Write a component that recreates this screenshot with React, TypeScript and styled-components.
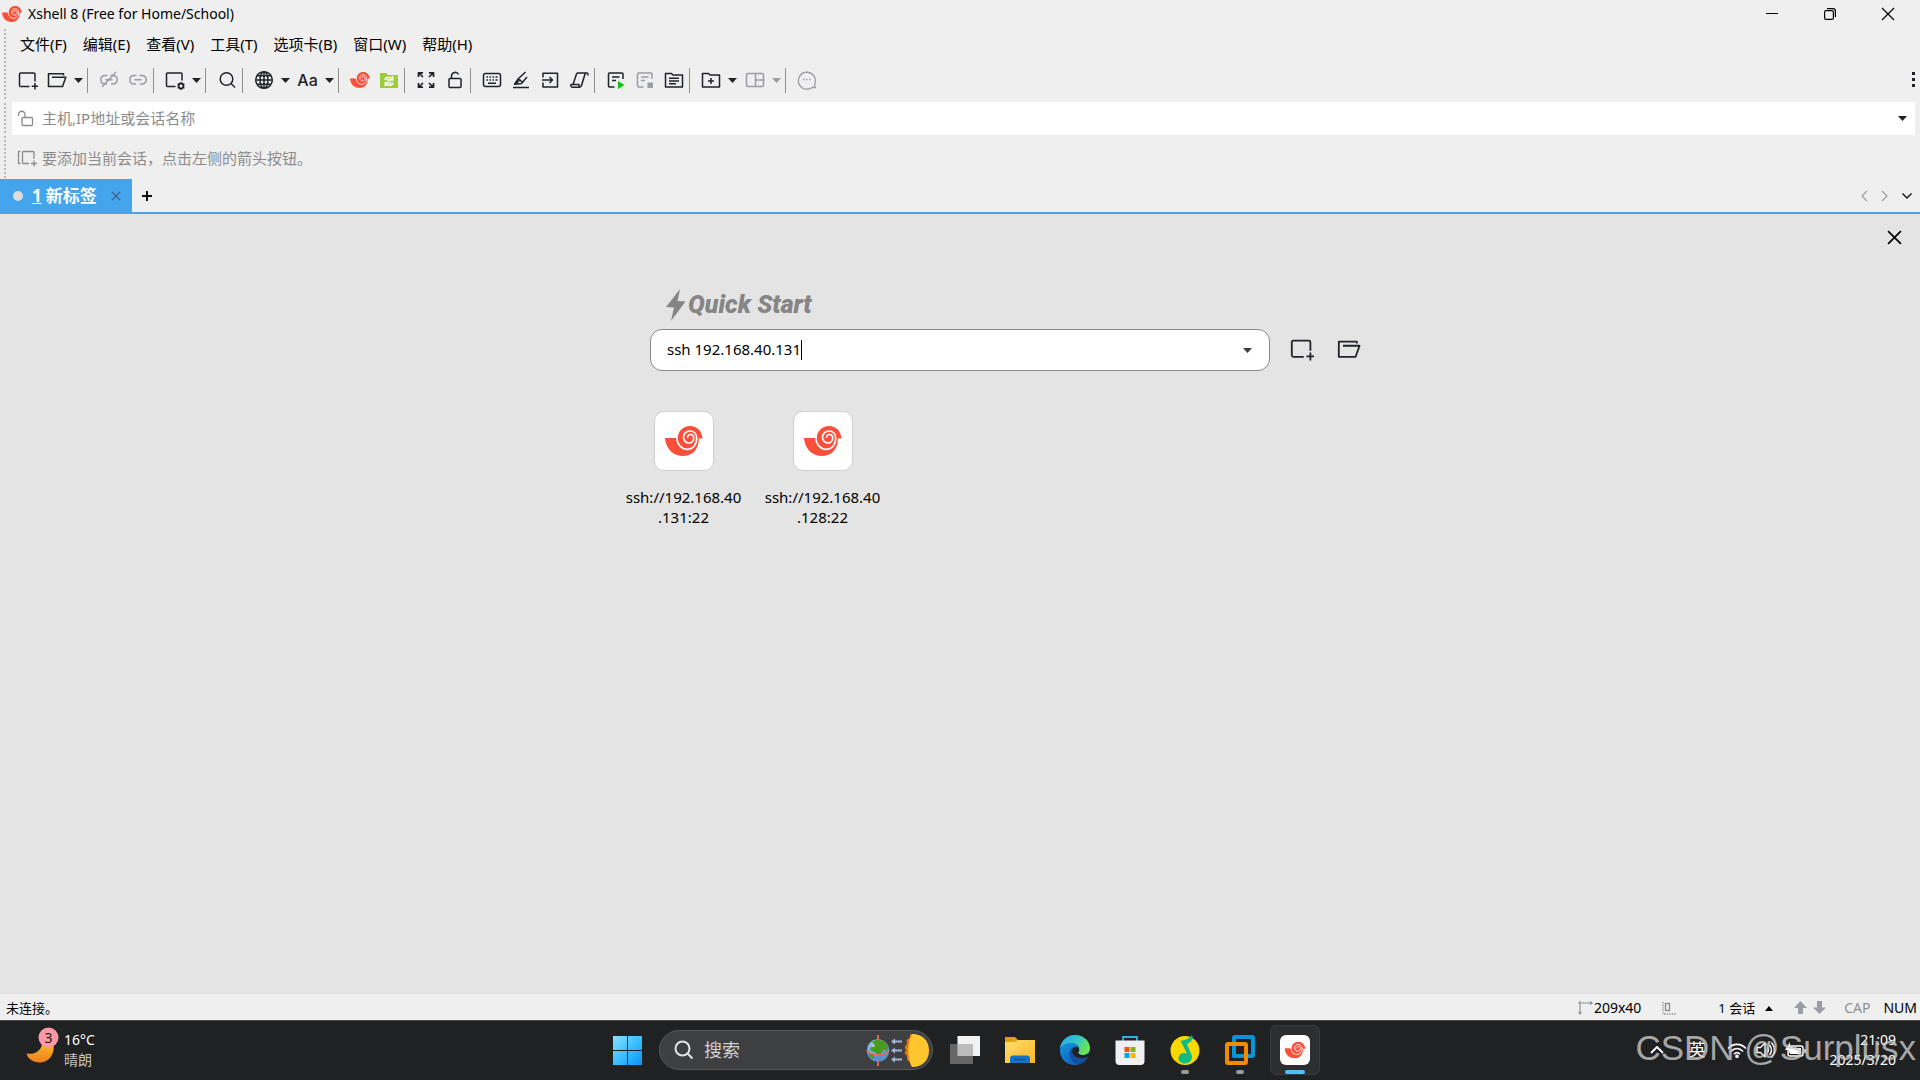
import React, { useState } from 'react';
import styled, { createGlobalStyle } from 'styled-components';

const Global = createGlobalStyle`
  *, *::before, *::after { box-sizing: border-box; }
  body {
    margin: 0;
    background: #efefef;
    color: #000;
    font: 14px/20px "Noto Sans", "Noto Sans CJK SC", sans-serif;
  }
  button, input { font: inherit; color: inherit; }
  button { border: 0; padding: 0; background: none; display: flex; align-items: center; justify-content: center; }
  svg { display: block; flex: none; }
`;

const Window = styled.div`
  display: flex;
  flex-direction: column;
  min-height: 100vh;
`;

const TitleBar = styled.header`
  display: flex;
  align-items: center;
  height: 28px;
  padding-left: 2px;
`;
const TitleText = styled.h1`
  flex: 1;
  margin: 0 0 0 6px;
  font-size: 14px;
  font-weight: 400;
`;
const WindowButton = styled.button`
  width: 58px;
  height: 28px;
`;
const WindowButtons = styled.div`
  display: flex;
  padding-right: 3px;
`;

const Band = styled.div<{ $height: number }>`
  display: flex;
  height: ${(p) => p.$height}px;
`;
const Grip = styled.span`
  flex: none;
  width: 2px;
  margin: 1px 7px 1px 4px;
  background: repeating-linear-gradient(#b9b9b9 0 2px, transparent 2px 4px);
`;

const Menu = styled.nav`
  display: flex;
  align-items: center;
  gap: 16px;
  padding-left: 7px;
`;
const MenuButton = styled.button`
  font-size: 15px;
`;

const Tools = styled.div`
  display: flex;
  flex: 1;
  align-items: center;
  padding-bottom: 2px;
`;
const ToolButton = styled.button<{ $dim?: boolean }>`
  width: 29px;
  height: 26px;
  color: ${(p) => (p.$dim ? '#9a9da3' : '#1f2228')};
`;
const DropButton = styled(ToolButton)`
  width: 15px;
`;
const Divider = styled.span`
  width: 1px;
  height: 25px;
  margin: 0 6px 0 1px;
  background: #8f8f8f;
`;
const FontLabel = styled.span`
  font: 500 16px/20px Inter, sans-serif;
`;
const Push = styled.span`
  flex: 1;
`;
const MoreButton = styled(ToolButton)`
  width: 14px;
`;

const AddressBar = styled.div`
  display: flex;
  flex: 1;
  align-items: center;
  margin: 0 5px 0 -1px;
  padding: 0 0 0 5px;
  background: #fff;
  color: #8c8c90;
`;
const AddressInput = styled.input`
  flex: 1;
  min-width: 0;
  margin-left: 7px;
  padding: 0 0 2px;
  border: 0;
  outline: 0;
  background: transparent;
  font-size: 15px;
  line-height: 24px;
  &::placeholder { color: #8c8c8c; opacity: 1; }
`;
const AddressDrop = styled(ToolButton)`
  width: 26px;
`;
const LinkBar = styled.div`
  display: flex;
  align-items: center;
  gap: 5px;
  padding: 2px 0 0 4px;
  color: #8c8c8c;
  font-size: 15px;
`;

const TabStrip = styled.div`
  display: flex;
  height: 35px;
  border-bottom: 2px solid #45a5ec;
`;
const Tab = styled.div`
  display: flex;
  align-items: center;
  width: 132px;
  padding: 0 9px 0 13px;
  background: #45a5ec;
  color: #fff;
`;
const TabDot = styled.span`
  width: 10px;
  height: 10px;
  margin-right: 9px;
  border-radius: 50%;
  background: #dcdcdc;
`;
const TabName = styled.button`
  flex: 1;
  justify-content: flex-start;
  gap: 4px;
  font-size: 17px;
  font-weight: 700;
  white-space: nowrap;
`;
const TabClose = styled.button`
  width: 14px;
  height: 20px;
  color: #3d5a72;
`;
const StripButton = styled.button<{ $width: number; $dim?: boolean }>`
  width: ${(p) => p.$width}px;
  color: ${(p) => (p.$dim ? '#a0a0a6' : '#111')};
`;

const Main = styled.main`
  display: flex;
  flex: 1;
  flex-direction: column;
  background: #e4e4e4;
`;
const PanelTop = styled.div`
  display: flex;
  justify-content: flex-end;
  padding: 11px 14px 0;
`;
const PanelClose = styled.button`
  width: 24px;
  height: 24px;
`;
const Quick = styled.section`
  display: grid;
  grid-template-columns: 1fr 620px 1fr;
  padding-top: 38px;
`;
const QuickTitle = styled.h2`
  grid-column: 2;
  display: flex;
  align-items: center;
  gap: 2px;
  height: 36px;
  margin: 0 0 6px;
  padding-left: 16px;
  color: #858585;
  font: italic 900 25px/36px Roboto, sans-serif;
`;
const CommandBox = styled.div`
  grid-column: 2;
  display: flex;
  align-items: center;
  height: 42px;
  padding: 0 13px 0 16px;
  border: 1px solid #8a8a8a;
  border-radius: 12px;
  background: #fff;
`;
const CommandInput = styled.input`
  field-sizing: content;
  min-width: 1px;
  padding: 0 0 2px;
  border: 0;
  outline: 0;
  background: transparent;
  caret-color: transparent;
  font-size: 15px;
  line-height: 22px;
`;
const TextCursor = styled.span`
  width: 1px;
  height: 20px;
  background: #000;
`;
const CommandDrop = styled.button`
  width: 18px;
  height: 24px;
  color: #3c3c3c;
`;
const SideActions = styled.div`
  display: flex;
  align-items: center;
  gap: 19px;
  padding: 0 0 2px 18px;
`;
const SideButton = styled.button`
  width: 28px;
  height: 28px;
  color: #1f2228;
`;
const Sessions = styled.ul`
  grid-column: 2;
  display: flex;
  margin: 40px 0 0 -36px;
  padding: 0;
  list-style: none;
`;
const SessionButton = styled.button`
  flex-direction: column;
  gap: 16px;
  width: 139px;
  font-size: 15px;
  line-height: 20px;
`;
const SessionTile = styled.span`
  display: flex;
  align-items: center;
  justify-content: center;
  width: 60px;
  height: 60px;
  border: 1px solid #cfcfcf;
  border-radius: 10px;
  background: #fff;
`;
const SessionName = styled.span`
  width: 122px;
  white-space: pre-line;
`;

const StatusBar = styled.footer`
  display: flex;
  align-items: center;
  height: 26px;
  padding: 2px 3px 0 6px;
  background: #efefef;
`;
const StatusText = styled.span<{ $dim?: boolean; $small?: boolean; $left?: number }>`
  margin-left: ${(p) => p.$left ?? 0}px;
  font-size: ${(p) => (p.$small ? 13 : 14)}px;
  color: ${(p) => (p.$dim ? '#8f8f8f' : '#000')};
`;
const StatusIcon = styled.span<{ $left: number }>`
  margin-left: ${(p) => p.$left}px;
`;

const Taskbar = styled.div`
  position: relative;
  display: grid;
  grid-template-columns: 1fr auto 1fr;
  height: 60px;
  padding-bottom: 1px;
  border-top: 1px solid #4a4a4c;
  background: #202123;
  color: #fff;
`;
const Weather = styled.button`
  justify-self: start;
  gap: 4px;
  padding-left: 26px;
`;
const WeatherText = styled.span`
  display: flex;
  flex-direction: column;
  text-align: left;
  font-size: 14px;
`;
const Muted = styled.span`
  color: #c4c4c4;
`;
const Apps = styled.div`
  display: flex;
  align-items: center;
  padding-left: 2px;
`;
const AppButton = styled.button`
  position: relative;
  width: 55px;
  height: 58px;
`;
const AppPlate = styled.span<{ $active?: boolean }>`
  display: flex;
  align-items: center;
  justify-content: center;
  width: 50px;
  height: 50px;
  border-radius: 6px;
  border: 1px solid ${(p) => (p.$active ? '#3a3b3d' : 'transparent')};
  background: ${(p) => (p.$active ? '#2d2e30' : 'transparent')};
`;
const AppMark = styled.span<{ $active?: boolean }>`
  position: absolute;
  bottom: 5px;
  left: 50%;
  width: ${(p) => (p.$active ? 20 : 8)}px;
  height: 4px;
  border-radius: 2px;
  background: ${(p) => (p.$active ? '#4cc2ff' : '#9a9a9a')};
  transform: translateX(-50%);
`;
const Search = styled.label`
  display: flex;
  align-items: center;
  width: 274px;
  height: 40px;
  margin: 0 4px;
  padding: 0 2px 0 14px;
  border: 1px solid #58595b;
  border-radius: 20px;
  background: #3e3f41;
`;
const SearchInput = styled.input`
  flex: 1;
  min-width: 0;
  margin-left: 10px;
  padding: 0;
  border: 0;
  outline: 0;
  background: transparent;
  font-size: 18px;
  line-height: 26px;
  &::placeholder { color: #d2d2d2; opacity: 1; }
`;
const Tray = styled.div`
  display: flex;
  align-items: center;
  justify-content: flex-end;
  padding-right: 24px;
`;
const TrayButton = styled.button<{ $width: number }>`
  width: ${(p) => p.$width}px;
  height: 40px;
  font-size: 17px;
`;
const Clock = styled.time`
  display: flex;
  flex-direction: column;
  width: 84px;
  text-align: right;
  font-size: 14px;
`;
const Watermark = styled.span`
  position: absolute;
  right: 4px;
  top: 5px;
  color: rgba(205, 205, 205, 0.78);
  font: 35px/44px "Liberation Sans", sans-serif;
  pointer-events: none;
`;

const Shell = ({ size = 20, bg = '#efefef' }: { size?: number; bg?: string }) => (
  <svg width={size} height={Math.round(size * 0.8)} viewBox="0 0 38 30" aria-hidden="true">
    <path fill="#fb4f39" d="M0 12H12.800C13 5 18 0 25 0C32 0 37 5 37.500 12.600H33.800C34 22.500 28 30 18.500 30C8 30 1 23 0 12Z" />
    <path fill="none" stroke={bg} strokeWidth="1.700" d="M11.800 11C12 19 17 23.300 22 23.300C28.500 23.300 31.700 18 31.700 12.600C31.700 7.500 28.500 5 25 5C21 5 18.500 8 18.500 11.200C18.500 14.500 21 17 24 17C27 17 28.700 14.500 28.700 12C28.700 9.700 27 8.500 25.500 8.500C23.500 8.500 22.300 10 22.700 11.700" />
  </svg>
);

const Line = ({ children, w = 20, h = 20, sw = 1.5, box }: { children: React.ReactNode; w?: number; h?: number; sw?: number; box?: string }) => (
  <svg width={w} height={h} viewBox={box ?? `0 0 ${w} ${h}`} fill="none" stroke="currentColor" strokeWidth={sw} strokeLinejoin="round" aria-hidden="true">
    {children}
  </svg>
);

const Down = () => (
  <svg width="9" height="5" viewBox="0 0 9 5" fill="currentColor" aria-hidden="true"><path d="M0 0H9L4.500 5Z" /></svg>
);
const NewSession = ({ size = 20 }: { size?: number }) => (
  <Line w={size} h={size} box="0 0 20 20"><path d="M11.500 16.500H2.800A1.300 1.300 0 0 1 1.500 15.200V4.300A1.300 1.300 0 0 1 2.800 3H15.700A1.300 1.300 0 0 1 17 4.300V11.500M17 13V19.500M13.700 16.200H20" /></Line>
);
const OpenFolder = ({ size = 20 }: { size?: number }) => (
  <Line w={size} h={size} box="0 0 20 20"><path d="M16.500 5.500V3.800H1.500V16.500H15.500L18.800 7.300H5" /></Line>
);
const Link = ({ off }: { off?: boolean }) => (
  <Line>
    <path d="M8.500 5.500H5.500A4.300 4.300 0 0 0 5.500 14H8M11.500 5.500H14.500A4.300 4.300 0 0 1 14.500 14H12M6.500 9.800H13.500" />
    {off && <path d="M3 17L17 2" />}
  </Line>
);
const Cross = ({ size, sw = 1.3 }: { size: number; sw?: number }) => (
  <Line w={size} h={size} sw={sw} box="0 0 14 14"><path d="M1 1L13 13M13 1L1 13" /></Line>
);

const icons: Record<string, React.ReactNode> = {
  new: <NewSession />,
  open: <OpenFolder />,
  unlink: <Link off />,
  link: <Link />,
  props: (
    <Line><path d="M10.500 16.500H2.500A1 1 0 0 1 1.500 15.500V4A1 1 0 0 1 2.500 3H16A1 1 0 0 1 17 4V10.500" /><circle cx="16" cy="16" r="2.400" strokeWidth="2" /><path strokeWidth="1" d="M16 12V20M12.500 14L19.500 18M12.500 18L19.500 14" /><circle cx="16" cy="16" r="1.500" fill="#efefef" stroke="none" /></Line>
  ),
  search: <Line><circle cx="9.500" cy="9" r="6.300" /><path d="M14 13.500L18 17.500" /></Line>,
  globe: <Line><circle cx="10" cy="10" r="8.300" /><ellipse cx="10" cy="10" rx="4" ry="8.300" /><path d="M10 1.700V18.300M1.700 10H18.300M3 5.800H17M3 14.200H17" /></Line>,
  font: <FontLabel>Aa</FontLabel>,
  xshell: <Shell size={20} />,
  xftp: (
    <svg width="20" height="20" viewBox="0 0 20 20" aria-hidden="true"><path fill="#9ccb3b" d="M1 3H7L9 5H19V18H1Z" /><path fill="none" stroke="#fff" strokeWidth="1.700" d="M6 10C6.500 7 11 6.300 13 8.800M13.600 6.300V9.900H8M14 12.500C13.500 15.500 9 16.300 7 13.800M6.400 16.300V12.700H12" /></svg>
  ),
  expand: <Line sw={1.7}><path d="M2.500 7V2.800H7M2.800 3L7 7M13 2.800H17.500V7M17.200 3L13 7M2.500 13V17.200H7M2.800 17L7 13M17.500 13V17.200H13M17.200 17L13 13" /></Line>,
  lock: <Line><rect x="4" y="8.500" width="12" height="9" rx="1" /><path d="M6.500 8.500V5.500A3.700 3.700 0 0 1 13.500 4.500" /></Line>,
  keyboard: <Line><rect x="1.500" y="3.500" width="17" height="13" rx="2" /><path d="M4.500 7H6M7.500 7H9M10.500 7H12M13.500 7H15.500M4.500 10H6M7.500 10H9M10.500 10H12M13.500 10H15.500M6 13.300H14" /></Line>,
  pen: <Line><path d="M14.500 2L7.500 8.500L3.500 14.300L10.500 13.500L16 7M3.500 14.300L8.500 10.500M7.500 8.500L11.500 12.500M2 17.500H18" /></Line>,
  enter: <Line><path d="M3 7.500V3.200H17.500V17H3V12.500M2 10H12.500M9.500 7L12.500 10L9.500 13" /></Line>,
  scroll: <Line><path d="M19 5.500C19.500 2.500 16.500 2.500 16 4L12.500 15.500C12 17.500 9.500 17 10 14.500H2C1.500 17 2.500 17.300 4 17.300H11M4 14.500L7.500 4C8 3 8.500 3 9 3H17.500" /></Line>,
  play: <Line><path d="M8.500 17H3.500A1 1 0 0 1 2.500 16V4A1 1 0 0 1 3.500 3H16A1 1 0 0 1 17 4V9M6 7H13.500M6 10.500H10" /><path fill="#0bc50b" stroke="none" d="M12 11L18.500 15L12 19Z" /></Line>,
  stop: <Line><path d="M8.500 17H3.500A1 1 0 0 1 2.500 16V4A1 1 0 0 1 3.500 3H16A1 1 0 0 1 17 4V9M6 7H13.500M6 10.500H10" /><rect x="12.500" y="12.500" width="5.500" height="5.500" fill="currentColor" stroke="none" /></Line>,
  list: <Line><path d="M1.500 3.500H7.500L9 5H18.500V17H1.500ZM5 8.200H15M5 11H15M5 13.800H12" /></Line>,
  add: <Line><path d="M1.500 3.500H7.500L9 5H18.500V17H1.500ZM10 8V14M7 11H13" /></Line>,
  layout: <Line><rect x="1.500" y="3.500" width="17" height="13" rx="1.500" /><path d="M10.500 3.500V16.500M10.500 10H18.500" /></Line>,
  chat: <Line sw={1.3}><path d="M15 17.500H18.300L17.500 14.500A8.500 8.500 0 1 0 15 17.500" /><path d="M6 9.500H7.500M9 9.500H10.500M12 9.500H13.500" /></Line>,
};

type Tool = { id: string; label: string; dim?: boolean; menu?: boolean };
const toolGroups: Tool[][] = [
  [{ id: 'new', label: '新建' }, { id: 'open', label: '打开', menu: true }],
  [{ id: 'unlink', label: '断开', dim: true }, { id: 'link', label: '重新连接', dim: true }],
  [{ id: 'props', label: '属性', menu: true }],
  [{ id: 'search', label: '查找' }],
  [{ id: 'globe', label: '编码', menu: true }, { id: 'font', label: '字体', menu: true }],
  [{ id: 'xshell', label: 'Xshell' }, { id: 'xftp', label: 'Xftp' }],
  [{ id: 'expand', label: '全屏' }, { id: 'lock', label: '锁定' }],
  [{ id: 'keyboard', label: '键盘' }, { id: 'pen', label: '突出显示' }, { id: 'enter', label: '撰写' }, { id: 'scroll', label: '脚本' }],
  [{ id: 'play', label: '运行' }, { id: 'stop', label: '停止', dim: true }, { id: 'list', label: '日志' }],
  [{ id: 'add', label: '新建文件夹', menu: true }, { id: 'layout', label: '布局', dim: true, menu: true }],
  [{ id: 'chat', label: '反馈', dim: true }],
];
const menus = ['文件(F)', '编辑(E)', '查看(V)', '工具(T)', '选项卡(B)', '窗口(W)', '帮助(H)'];
const sessions = ['ssh://192.168.40\n.131:22', 'ssh://192.168.40\n.128:22'];

const Moon = () => (
  <svg width="34" height="48" viewBox="0 0 34 48" aria-hidden="true">
    <defs><linearGradient id="moon" x1="0" y1="0" x2="0" y2="1"><stop offset="0" stopColor="#f7c02c" /><stop offset="1" stopColor="#f07c1c" /></linearGradient></defs>
    <path fill="url(#moon)" d="M27 16C30 28 23 36.500 13.500 36.500C7 36.500 2 33 .5 27.500C9 29 15 25 16.500 17Z" />
    <circle cx="22.500" cy="11.500" r="10" fill="#fd98a4" />
    <text x="22.500" y="16.500" textAnchor="middle" fontSize="14" fill="#1a1a1a">3</text>
  </svg>
);
const Earth = () => (
  <svg width="64" height="34" viewBox="0 0 64 34" aria-hidden="true">
    <defs><radialGradient id="sea" cx=".4" cy=".3"><stop offset="0" stopColor="#b9dcf2" /><stop offset="1" stopColor="#5b90c8" /></radialGradient></defs>
    <path stroke="#ee6a4c" strokeWidth="1.500" d="M12 2V33" />
    <circle cx="12" cy="17.500" r="11.200" fill="url(#sea)" />
    <path fill="#4b9a1d" d="M6 9L11 6.500L18 8L22 13L21 18L18 16L16 19L13 23L10 20L4 17L5 14L9 14L8 11ZM3 20L8 22L8 26L4 24Z" />
    <path fill="none" stroke="#ee6a4c" strokeWidth="1.300" d="M.8 17.500C3 23 21 23 23.200 17.500M12 2V7M12 28V33" />
    <path fill="#9fb6d8" d="M25 8.500L29 5.500V7.500H36V9.500H29V11.500ZM25 17.500L29 14.500V16.500H36V18.500H29V20.500ZM25 26.500L29 23.500V25.500H36V27.500H29V29.500Z" />
    <path fill="#e8720c" d="M48 1L44 1.500L43.500 5L40.500 7L41 11L38.500 14L40 17L38.500 20L41 23L41 27L44 29L45 33L50 33Z" />
    <path fill="#ffc62e" d="M46 1C57 1 63 8 63 17.500C63 27 57 34 46 34C41 25 41 10 46 1Z" />
  </svg>
);

const StartLogo = () => (
  <svg width="29" height="29" viewBox="0 0 29 29" aria-hidden="true">
    <defs><linearGradient id="win" x1="0" y1="0" x2="1" y2="1"><stop offset="0" stopColor="#8be0ff" /><stop offset=".5" stopColor="#3cc0fb" /><stop offset="1" stopColor="#0a93f6" /></linearGradient></defs>
    <path fill="url(#win)" d="M0 0H14V14H0ZM15 0H29V14H15ZM0 15H14V29H0ZM15 15H29V29H15Z" />
  </svg>
);
const TaskView = () => (
  <svg width="30" height="30" viewBox="0 0 30 30" aria-hidden="true"><path fill="#f2f2f2" d="M7.500 1H30V21H7.500Z" /><path fill="#666" d="M0 9H7.500V21H23V29H0Z" /><path fill="#bcbcbc" d="M7.500 9H23V21H7.500Z" /></svg>
);
const Files = () => (
  <svg width="30" height="30" viewBox="0 0 30 30" aria-hidden="true">
    <defs><linearGradient id="fold" x1="0" y1="0" x2="1" y2="1"><stop offset="0" stopColor="#ffdd75" /><stop offset="1" stopColor="#fbb81c" /></linearGradient></defs>
    <path fill="#dfa00c" d="M0 2H10L13 5V8H0Z" /><path fill="url(#fold)" d="M0 7H10L13 5H30V28H0Z" /><path fill="#1473c8" d="M5 28V23Q5 20.500 8 20.500H22Q25 20.500 25 23V28Z" /><path stroke="#0c4f93" strokeWidth="1.200" d="M9 24.500H21" />
  </svg>
);
const Edge = () => (
  <svg width="30" height="30" viewBox="0 0 30 30" aria-hidden="true">
    <defs>
      <linearGradient id="eg" x1="0" y1="0" x2="1" y2=".4"><stop offset="0" stopColor="#2aa8e8" /><stop offset=".6" stopColor="#35c7c3" /><stop offset="1" stopColor="#6be355" /></linearGradient>
      <linearGradient id="eb" x1="0" y1="0" x2=".6" y2="1"><stop offset="0" stopColor="#1595dc" /><stop offset="1" stopColor="#0c65c4" /></linearGradient>
    </defs>
    <circle cx="15" cy="15" r="15" fill="#144f9e" />
    <path fill="url(#eg)" d="M0 14C.5 6 7 0 15 0C24 0 30 6.500 30 13C30 18 26 20 22.500 20C19.500 20 17.500 18.500 18.500 17C20.500 13 18 8.500 12 8.500C6 8.500 1 11 0 14Z" />
    <path fill="url(#eb)" d="M0 15C.5 11 5 8 10.500 8C15 8 18 10 18.500 12C14 10 9 14 9.500 19.500C10 25 14 29 19 29.500C8 32 0 25 0 15Z" />
    <path fill="#202123" d="M18.500 12.500C14 11 10.500 15 13 19C16 23.500 23 24.500 28.500 21.500L30 22V17C28 20 24.500 20.500 22 20C18.500 19.500 17.500 18 18.500 17C19.500 15.500 19.500 14 18.500 12.500Z" />
  </svg>
);
const Store = () => (
  <svg width="30" height="30" viewBox="0 0 30 30" aria-hidden="true">
    <path fill="none" stroke="#27b2e8" strokeWidth="1.800" d="M8 7V2H22V7" /><path fill="#f0f0f0" d="M.5 5.500H29.500V26Q29.500 30 25.500 30H4.500Q.5 30 .5 26Z" />
    <path fill="#f04e23" d="M9.500 12H14.500V17H9.500Z" /><path fill="#80b903" d="M15.500 12H20.500V17H15.500Z" /><path fill="#08a3ee" d="M9.500 18H14.500V23H9.500Z" /><path fill="#fcb707" d="M15.500 18H20.500V23H15.500Z" />
  </svg>
);
const Music = () => (
  <svg width="30" height="30" viewBox="0 0 30 30" aria-hidden="true"><circle cx="15" cy="15.500" r="14.500" fill="#fbd900" /><path fill="#10bb86" d="M10.500 6C14 5 19.500 4 22 0C24 4 21 7.500 17 9L22 21C22.500 25.500 19 28.500 15 28.500C11 28.500 8 26 8.500 22.500C9 19 13 17 17 18.500L10.500 6Z" /></svg>
);
const VmWare = () => (
  <svg width="30" height="30" viewBox="0 0 30 30" fill="none" aria-hidden="true"><rect x="9" y="2" width="19" height="19" rx="1" stroke="#0696d7" strokeWidth="4" /><rect x="2" y="9" width="19" height="19" rx="1" stroke="#f38b00" strokeWidth="4" /><path stroke="#0696d7" strokeWidth="4" d="M9 12V20.500H18" /><path stroke="#202123" strokeWidth="1" d="M11.500 11.500H18.500V18.500H11.500Z" /></svg>
);
const XshellApp = () => (
  <svg width="30" height="30" viewBox="0 0 30 30" aria-hidden="true"><rect width="30" height="30" rx="6" fill="#fff" /><g transform="translate(4.500 6.500)"><Shell size={21} bg="#fff" /></g></svg>
);

const apps = [
  { name: '任务视图', icon: <TaskView /> },
  { name: '文件资源管理器', icon: <Files /> },
  { name: 'Microsoft Edge', icon: <Edge /> },
  { name: 'Microsoft Store', icon: <Store /> },
  { name: 'QQ音乐', icon: <Music />, running: true },
  { name: 'VMware', icon: <VmWare />, running: true },
  { name: 'Xshell', icon: <XshellApp />, running: true, active: true },
];

export default function App() {
  const [command, setCommand] = useState('ssh 192.168.40.131');
  return (
    <Window>
      <Global />
      <TitleBar>
        <Shell size={20} />
        <TitleText>Xshell 8 (Free for Home/School)</TitleText>
        <WindowButtons>
          <WindowButton aria-label="最小化"><Line w={12} h={12} sw={1}><path d="M0 5.500H12" /></Line></WindowButton>
          <WindowButton aria-label="还原"><Line w={12} h={12} sw={1.2}><rect x=".6" y="2.600" width="8.800" height="8.800" rx="1.500" /><path d="M3 .6H9Q11.400 .6 11.400 3V9" /></Line></WindowButton>
          <WindowButton aria-label="关闭"><Cross size={14} sw={1.2} /></WindowButton>
        </WindowButtons>
      </TitleBar>

      <Band $height={32}>
        <Grip />
        <Menu>{menus.map((m) => <MenuButton key={m}>{m}</MenuButton>)}</Menu>
      </Band>
      <Band $height={42}>
        <Grip />
        <Tools>
          {toolGroups.map((group, i) => (
            <React.Fragment key={i}>
              {i > 0 && <Divider />}
              {group.map((t) => (
                <React.Fragment key={t.id}>
                  <ToolButton $dim={t.dim} aria-label={t.label}>{icons[t.id]}</ToolButton>
                  {t.menu && <DropButton $dim={t.id === 'layout'} aria-label={`${t.label}菜单`}><Down /></DropButton>}
                </React.Fragment>
              ))}
            </React.Fragment>
          ))}
          <Push />
          <MoreButton aria-label="更多">
            <svg width="3" height="16" viewBox="0 0 3 16" fill="currentColor" aria-hidden="true"><path d="M0 0H3V3H0ZM0 6H3V9H0ZM0 12H3V15H0Z" /></svg>
          </MoreButton>
        </Tools>
      </Band>
      <Band $height={33}>
        <Grip />
        <AddressBar>
          <Line w={18} h={18} sw={1.3}><rect x="5" y="7.500" width="10.500" height="8" rx="1" /><path d="M8 7.500V4.500A3 3 0 0 0 1.500 4.500V6" /></Line>
          <AddressInput aria-label="地址" placeholder="主机,IP地址或会话名称" />
          <AddressDrop aria-label="地址列表"><Down /></AddressDrop>
        </AddressBar>
      </Band>
      <Band $height={44}>
        <Grip />
        <LinkBar>
          <Line w={20} h={18} sw={1.3}><path d="M3.500 2.500H1.500V14.500H3.500M12 14.500H6.500A1 1 0 0 1 5.500 13.500V3.500A1 1 0 0 1 6.500 2.500H16A1 1 0 0 1 17 3.500V10M17 11.500V17.500M14 14.500H20" /></Line>
          <span>要添加当前会话，点击左侧的箭头按钮。</span>
        </LinkBar>
      </Band>

      <TabStrip>
        <Tab>
          <TabDot />
          <TabName><u>1</u> 新标签</TabName>
          <TabClose aria-label="关闭标签"><Cross size={10} sw={1.6} /></TabClose>
        </Tab>
        <StripButton $width={30} aria-label="新建标签"><Line w={10} h={10} sw={2}><path d="M5 0V10M0 5H10" /></Line></StripButton>
        <Push />
        <StripButton $width={19} $dim aria-label="上一个"><Line w={7} h={12} sw={1.3}><path d="M6 1L1 6L6 11" /></Line></StripButton>
        <StripButton $width={20} $dim aria-label="下一个"><Line w={7} h={12} sw={1.3}><path d="M1 1L6 6L1 11" /></Line></StripButton>
        <StripButton $width={26} aria-label="标签列表"><Line w={10} h={6} sw={1.4}><path d="M.5 .5L5 5L9.500 .5" /></Line></StripButton>
      </TabStrip>

      <Main>
        <PanelTop><PanelClose aria-label="关闭快速启动"><Cross size={15} sw={1.6} /></PanelClose></PanelTop>
        <Quick>
          <QuickTitle>
            <svg width="20" height="32" viewBox="0 0 20 32" fill="#858585" aria-hidden="true"><path d="M14 0L0 18L8 18.500L5 32L19.500 12.500L11.500 12Z" /></svg>
            Quick Start
          </QuickTitle>
          <CommandBox>
            <CommandInput aria-label="命令" value={command} onChange={(e) => setCommand(e.target.value)} />
            <TextCursor />
            <Push />
            <CommandDrop aria-label="历史记录"><Down /></CommandDrop>
          </CommandBox>
          <SideActions>
            <SideButton aria-label="新建会话"><NewSession size={24} /></SideButton>
            <SideButton aria-label="打开会话"><OpenFolder size={24} /></SideButton>
          </SideActions>
          <Sessions>
            {sessions.map((s) => (
              <li key={s}><SessionButton><SessionTile><Shell size={38} bg="#fff" /></SessionTile><SessionName>{s}</SessionName></SessionButton></li>
            ))}
          </Sessions>
        </Quick>
      </Main>

      <StatusBar>
        <StatusText $small>未连接。</StatusText>
        <Push />
        <svg width="15" height="14" viewBox="0 0 15 14" fill="none" stroke="#8f9296" strokeWidth="1.200" aria-hidden="true"><path d="M2 12V2H14M0 2H4M2 0V4M12 .5L14 2L12 3.500M.5 11L2 13L3.500 11" /></svg>
        <StatusText $left={1}>209x40</StatusText>
        <StatusIcon $left={21}><svg width="14" height="14" viewBox="0 0 14 14" fill="none" stroke="#85888c" strokeWidth="1.300" aria-hidden="true"><rect x="3.500" y="2.500" width="4" height="7" /><path strokeDasharray="1.300 1.300" d="M1 1V13H14" /></svg></StatusIcon>
        <StatusText $left={42} $small>1 会话</StatusText>
        <StatusIcon $left={10}><svg width="8" height="5" viewBox="0 0 8 5" aria-hidden="true"><path d="M0 5L4 0L8 5Z" /></svg></StatusIcon>
        <StatusIcon $left={21}><svg width="32" height="14" viewBox="0 0 32 14" fill="#9a9ea2" aria-hidden="true"><path d="M6.500 0L13 7H9V13H4V7H0ZM25.500 13L19 6.500H23V0H28V6.500H32Z" /></svg></StatusIcon>
        <StatusText $left={18} $dim>CAP</StatusText>
        <StatusText $left={13}>NUM</StatusText>
      </StatusBar>

      <Taskbar>
        <Weather>
          <Moon />
          <WeatherText><span>16°C</span><Muted>晴朗</Muted></WeatherText>
        </Weather>
        <Apps>
          <AppButton aria-label="开始"><StartLogo /></AppButton>
          <Search>
            <svg width="20" height="20" viewBox="0 0 20 20" fill="none" stroke="#e4e4e4" strokeWidth="2" aria-hidden="true"><circle cx="8.500" cy="8.500" r="7" /><path d="M13.500 13.500L18.500 18.500" /></svg>
            <SearchInput aria-label="搜索" placeholder="搜索" />
            <Earth />
          </Search>
          {apps.map((a) => (
            <AppButton key={a.name} aria-label={a.name}>
              <AppPlate $active={a.active}>{a.icon}</AppPlate>
              {a.running && <AppMark $active={a.active} />}
            </AppButton>
          ))}
        </Apps>
        <Tray>
          <TrayButton $width={30} aria-label="显示隐藏的图标"><Line w={14} h={8} sw={1.8}><path d="M1 7L7 1L13 7" /></Line></TrayButton>
          <TrayButton $width={50}>英</TrayButton>
          <TrayButton $width={30} aria-label="网络"><Line w={20} h={16} sw={1.7}><path d="M1 6.500C6 1 14 1 19 6.500M4 9.500C7.500 5.500 12.500 5.500 16 9.500M7 12.200C9 10 11 10 13 12.200" /><circle cx="10" cy="14.300" r="1" fill="currentColor" /></Line></TrayButton>
          <TrayButton $width={28} aria-label="音量"><Line w={20} h={18} sw={1.4}><path d="M1 6.500H4.500L9 2V16L4.500 11.500H1ZM11.500 6.500Q13.500 9 11.500 11.500M13.500 4Q17.500 9 13.500 14M15.500 1.500Q21.500 9 15.500 16.500" /></Line></TrayButton>
          <TrayButton $width={32} aria-label="电池"><Line w={22} h={16} sw={1.4}><rect x="3" y="4" width="15" height="10" rx="2" /><rect x="5" y="6" width="11" height="6" fill="currentColor" stroke="none" /><path d="M20 7V11" /><path fill="currentColor" stroke="none" d="M5 0L0 8H4L3 13L8 5H5Z" /></Line></TrayButton>
          <Clock dateTime="2025-03-20T21:09"><span>21:09</span><span>2025/3/20</span></Clock>
        </Tray>
        <Watermark>CSDN @Surplusx</Watermark>
      </Taskbar>
    </Window>
  );
}
